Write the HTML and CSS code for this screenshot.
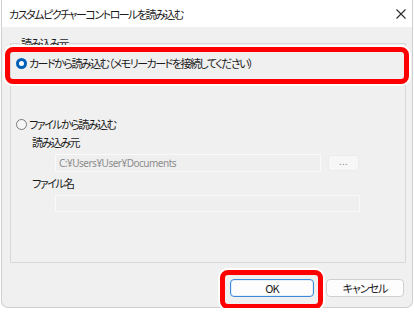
FILE: index.html
```html
<!DOCTYPE html>
<html>
<head>
    <title>カスタムピクチャーコントロールを読み込む</title>
    <link rel="stylesheet" href="styles.css">
</head>
<body>
    <div class="window">
        <div class="titlebar">
            <span class="title">カスタムピクチャーコントロールを読み込む</span>
            <svg class="close" width="10" height="10" viewBox="0 0 10 10">
                <path d="M0.5 0.5 L9.5 9.5 M9.5 0.5 L0.5 9.5" stroke="#2b2b2b" stroke-width="1.1" fill="none"/>
            </svg>
        </div>
        <div class="content">
            <fieldset class="group">
                <legend>読み込み元</legend>
                <div class="radio-row first">
                    <span class="radio checked"></span>
                    <span>カードから読み込む（メモリーカードを接続してください）</span>
                </div>
                <div class="radio-row second">
                    <span class="radio"></span>
                    <span>ファイルから読み込む</span>
                </div>
                <div class="field-label">読み込み元</div>
                <div class="field-row">
                    <div class="input path">C:¥Users¥User¥Documents</div>
                    <div class="browse">...</div>
                </div>
                <div class="field-label">ファイル名</div>
                <div class="field-row">
                    <div class="input name"></div>
                </div>
            </fieldset>
            <div class="buttons">
                <button class="btn default">OK</button>
                <button class="btn">キャンセル</button>
            </div>
        </div>
        <!-- highlight marks -->
        <div class="mark mark-card"></div>
        <div class="mark mark-ok"></div>
    </div>
</body>
</html>
```
FILE: styles.css
```css
body {
    margin: 0;
    padding: 0;
    background-color: #fff;
    font-family: "Noto Sans CJK JP", "Noto Sans", sans-serif;
    font-feature-settings: "palt";
    color: #1b1b1b;
}
.window {
    position: relative;
    margin-left: 1px;
    width: 410px;
    height: 307px;
    border: 1px solid #cfcfcf;
    border-top: none;
    border-radius: 0 0 7px 7px;
    background-color: #f0f0f0;
}
.titlebar {
    height: 27px;
    background-color: #fff;
    display: flex;
    align-items: center;
    justify-content: space-between;
    padding: 0 6px 0 7px;
}
.title {
    font-size: 11px;
    letter-spacing: -1.5px;
    line-height: 14px;
}
.close {
    margin-top: 1px;
}
.content {
    padding: 9px 6px 0 8px;
}
.group {
    margin: 0;
    padding: 0 0 0 5px;
    height: 225px;
    border: 1px solid #d8d8d8;
    font-size: 11px;
    letter-spacing: -1.5px;
}
.group legend {
    padding: 0 1px;
    margin-left: 4px;
    line-height: 14px;
}
.radio-row {
    display: flex;
    align-items: center;
    gap: 2px;
    height: 16px;
    line-height: 16px;
}
.radio-row.first {
    margin-top: 5px;
}
.radio-row.second {
    margin-top: 45px;
}
.radio {
    width: 9px;
    height: 9px;
    border-radius: 50%;
    border: 1px solid #7a7a7a;
    background-color: #f6f6f6;
}
.radio.checked {
    width: 5px;
    height: 5px;
    border: 3px solid #005fb8;
    background-color: #fff;
}
.field-label {
    margin: 2px 0 0 16px;
    line-height: 16px;
}
.field-label + .field-row {
    margin-top: 4px;
}
.field-row + .field-label {
    margin-top: 3px;
}
.field-row {
    display: flex;
    align-items: center;
    gap: 7px;
    margin-left: 39px;
}
.input {
    box-sizing: border-box;
    height: 18px;
    border: 1px solid #f9f9f9;
    background-color: #efefef;
    color: #8c8c8c;
    font-family: "Noto Sans", "Noto Sans CJK JP", sans-serif;
    font-size: 10px;
    letter-spacing: -0.5px;
    line-height: 16px;
    padding-left: 3px;
}
.input.path {
    width: 266px;
}
.input.name {
    width: 305px;
    height: 17px;
}
.browse {
    box-sizing: border-box;
    width: 31px;
    height: 16px;
    border: 1px solid #ececec;
    border-radius: 3px;
    background-color: #f7f7f7;
    color: #8c8c8c;
    font-size: 9px;
    letter-spacing: 0.5px;
    line-height: 12px;
    text-align: center;
}
.buttons {
    display: flex;
    justify-content: flex-end;
    gap: 12px;
    margin-top: 16px;
    padding-right: 2px;
}
.btn {
    box-sizing: border-box;
    height: 18px;
    width: 78px;
    padding: 0;
    border: 1px solid #d0d0d0;
    border-radius: 4px;
    background-color: #fdfdfd;
    font-family: "Noto Sans CJK JP", "Noto Sans", sans-serif;
    font-feature-settings: "palt";
    font-size: 11px;
    letter-spacing: -1px;
    color: #1b1b1b;
}
.btn.default {
    width: 84px;
    border: 1px solid #3a8ad8;
    box-shadow: inset 0 0 0 1px #e6f0fa;
}
.mark {
    position: absolute;
    box-sizing: border-box;
    border: 5px solid #ff0000;
    border-radius: 8px;
    box-shadow: 0 0 0 2px #fff;
}
.mark-card {
    left: 3px;
    top: 47px;
    width: 404px;
    height: 37px;
}
.mark-ok {
    left: 218px;
    top: 270px;
    width: 103px;
    height: 39px;
}
```
